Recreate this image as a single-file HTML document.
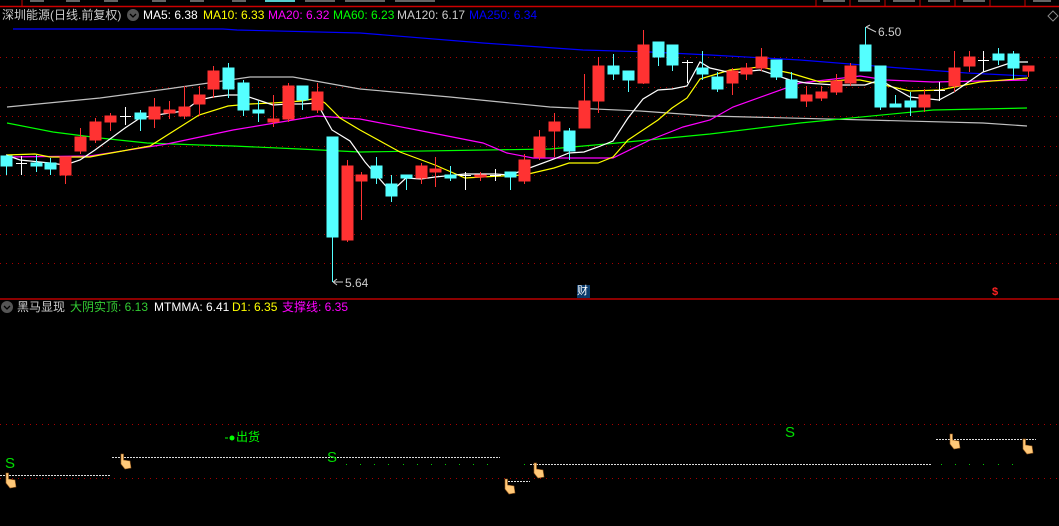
<!DOCTYPE html>
<html><head><meta charset="utf-8"><style>
html,body{margin:0;padding:0;background:#000;width:1059px;height:526px;overflow:hidden}
body{position:relative;font-family:"Liberation Sans","Noto Sans CJK SC",sans-serif;font-size:12px}
.t{position:absolute;white-space:nowrap;line-height:14px}
</style></head><body>
<svg width="1059" height="526" style="position:absolute;left:0;top:0" xmlns="http://www.w3.org/2000/svg">
<line x1="0" y1="6.5" x2="1059" y2="6.5" stroke="#c00" stroke-width="1.5"/>
<line x1="22" y1="0" x2="22" y2="6" stroke="#c00"/>
<g stroke="#c00"><line x1="816" y1="0" x2="816" y2="6"/><line x1="850" y1="0" x2="850" y2="6"/><line x1="885" y1="0" x2="885" y2="6"/><line x1="920" y1="0" x2="920" y2="6"/><line x1="955" y1="0" x2="955" y2="6"/><line x1="990" y1="0" x2="990" y2="6"/><line x1="1025" y1="0" x2="1025" y2="6"/></g>
<g fill="#666"><rect x="30" y="0" width="14" height="2"/><rect x="66" y="0" width="14" height="2"/><rect x="104" y="0" width="14" height="2"/><rect x="152" y="0" width="14" height="2"/><rect x="190" y="0" width="14" height="2"/><rect x="232" y="0" width="14" height="2"/><rect x="305" y="0" width="30" height="2"/><rect x="345" y="0" width="40" height="2"/><rect x="395" y="0" width="40" height="2"/><rect x="823" y="0" width="22" height="2"/><rect x="858" y="0" width="22" height="2"/><rect x="893" y="0" width="22" height="2"/><rect x="928" y="0" width="22" height="2"/><rect x="963" y="0" width="22" height="2"/><rect x="1033" y="0" width="18" height="2"/></g>
<rect x="265" y="0" width="30" height="2" fill="#5cc"/>
<path d="M1053 11 L1058 16 L1053 21 L1048 16 Z" fill="none" stroke="#888"/>
<g stroke="#a00" stroke-dasharray="1 5" stroke-width="1">
<line x1="0" y1="57.5" x2="1059" y2="57.5"/><line x1="0" y1="87.5" x2="1059" y2="87.5"/><line x1="0" y1="116.5" x2="1059" y2="116.5"/><line x1="0" y1="146.5" x2="1059" y2="146.5"/><line x1="0" y1="175.5" x2="1059" y2="175.5"/><line x1="0" y1="205.5" x2="1059" y2="205.5"/><line x1="0" y1="234.5" x2="1059" y2="234.5"/><line x1="0" y1="263.5" x2="1059" y2="263.5"/>
<line x1="0" y1="424.5" x2="1059" y2="424.5"/><line x1="0" y1="478.5" x2="1059" y2="478.5"/>
</g>
<line x1="0" y1="299" x2="1059" y2="299" stroke="#b00" stroke-width="1.5"/>
<g fill="none" stroke-width="1.2">
<polyline stroke="#0000ff" points="13,29 223,29 237,30 360,33 483,43 583,50 650,52 710,55 800,60 900,68 967,73 1027,76"/>
<polyline stroke="#c0c0c0" points="7,107 100,98 167,89 250,77 293,77 360,89 450,97 550,107 640,111 710,116 867,120 983,123 1027,126"/>
<polyline stroke="#00ff00" points="7,123 53,132 100,138 147,143 200,145 233,146 300,149 360,152 550,149 617,143 710,134 800,123 933,110 1027,108"/>
<polyline stroke="#ff00ff" points="7,157 90,156 167,144 233,130 317,116 360,119 417,130 483,143 507,153 533,158 613,158 650,140 683,127 710,120 733,107 800,83 860,76 887,80 933,82 1027,80"/>
<polyline stroke="#ffff00" points="6,155 35,154 50,157 90,157 100,155 150,146 199,115 228,106 250,104 273,103 302,101 317,98 325,103 340,118 360,130 400,152 435,165 465,178 500,176 524,175 554,168 569,163 598,163 613,157 628,140 643,130 658,120 672,108 687,98 700,79 730,70 760,67 790,73 820,82 845,80 860,80 880,84 910,91 940,90 980,82 1028,78"/>
<polyline stroke="#ffffff" points="6,155 20,160 50,163 65,165 80,160 95,150 125,128 140,118 169,113 184,111 199,100 213,97 228,95 243,95 258,100 273,105 288,104 302,104 317,103 332,130 350,141 365,162 391,192 406,178 421,179 435,177 465,174 495,174 510,175 524,170 554,159 569,153 584,152 598,147 613,141 628,118 643,99 658,90 672,89 687,86 700,62 710,68 732,73 760,70 790,80 806,83 835,85 865,85 880,80 910,97 939,100 954,92 983,72 1013,62 1028,62"/>
</g>
<g stroke-width="1">
<g stroke="#54ffff" fill="#54ffff">
<line x1="6.5" y1="155" x2="6.5" y2="175"/><rect x="1" y="156" width="11" height="10"/>
<line x1="36.5" y1="155" x2="36.5" y2="172"/><rect x="31" y="163" width="11" height="3"/>
<line x1="50.5" y1="158" x2="50.5" y2="175"/><rect x="45" y="163" width="11" height="6"/>
<line x1="140.5" y1="110" x2="140.5" y2="131"/><rect x="135" y="113" width="11" height="6"/>
<line x1="228.5" y1="63" x2="228.5" y2="98"/><rect x="223" y="68" width="11" height="21"/>
<line x1="243.5" y1="80" x2="243.5" y2="116"/><rect x="238" y="83" width="11" height="27"/>
<line x1="258.5" y1="101" x2="258.5" y2="122"/><rect x="253" y="110" width="11" height="3"/>
<line x1="302.5" y1="86" x2="302.5" y2="110"/><rect x="297" y="86" width="11" height="14"/>
<line x1="332.5" y1="137" x2="332.5" y2="282"/><rect x="327" y="137" width="11" height="100"/>
<line x1="376.5" y1="157" x2="376.5" y2="184"/><rect x="371" y="166" width="11" height="12"/>
<line x1="391.5" y1="175" x2="391.5" y2="202"/><rect x="386" y="184" width="11" height="12"/>
<line x1="406.5" y1="175" x2="406.5" y2="190"/><rect x="401" y="175" width="11" height="3"/>
<line x1="450.5" y1="166" x2="450.5" y2="181"/><rect x="445" y="175" width="11" height="3"/>
<line x1="510.5" y1="172" x2="510.5" y2="190"/><rect x="505" y="172" width="11" height="5"/>
<line x1="569.5" y1="128" x2="569.5" y2="160"/><rect x="564" y="131" width="11" height="20"/>
<line x1="613.5" y1="54" x2="613.5" y2="80"/><rect x="608" y="66" width="11" height="8"/>
<line x1="628.5" y1="71" x2="628.5" y2="92"/><rect x="623" y="71" width="11" height="9"/>
<line x1="658.5" y1="42" x2="658.5" y2="66"/><rect x="653" y="42" width="11" height="15"/>
<line x1="672.5" y1="45" x2="672.5" y2="71"/><rect x="667" y="45" width="11" height="20"/>
<line x1="702.5" y1="51" x2="702.5" y2="80"/><rect x="697" y="68" width="11" height="6"/>
<line x1="717.5" y1="72" x2="717.5" y2="92"/><rect x="712" y="77" width="11" height="12"/>
<line x1="776.5" y1="60" x2="776.5" y2="80"/><rect x="771" y="60" width="11" height="17"/>
<line x1="791.5" y1="72" x2="791.5" y2="98"/><rect x="786" y="80" width="11" height="18"/>
<line x1="865.5" y1="27" x2="865.5" y2="71"/><rect x="860" y="45" width="11" height="26"/>
<line x1="880.5" y1="66" x2="880.5" y2="110"/><rect x="875" y="66" width="11" height="41"/>
<line x1="895.5" y1="95" x2="895.5" y2="107"/><rect x="890" y="104" width="11" height="3"/>
<line x1="910.5" y1="92" x2="910.5" y2="116"/><rect x="905" y="101" width="11" height="6"/>
<line x1="998.5" y1="48" x2="998.5" y2="65"/><rect x="993" y="54" width="11" height="6"/>
<line x1="1013.5" y1="51" x2="1013.5" y2="80"/><rect x="1008" y="54" width="11" height="14"/>
</g>
<g stroke="#ff3232" fill="#ff3232">
<line x1="65.5" y1="157" x2="65.5" y2="184"/><rect x="60" y="157" width="11" height="18"/>
<line x1="80.5" y1="128" x2="80.5" y2="154"/><rect x="75" y="137" width="11" height="14"/>
<line x1="95.5" y1="118" x2="95.5" y2="143"/><rect x="90" y="122" width="11" height="18"/>
<line x1="110.5" y1="113" x2="110.5" y2="131"/><rect x="105" y="116" width="11" height="6"/>
<line x1="154.5" y1="98" x2="154.5" y2="128"/><rect x="149" y="107" width="11" height="12"/>
<line x1="169.5" y1="101" x2="169.5" y2="119"/><rect x="164" y="110" width="11" height="3"/>
<line x1="184.5" y1="86" x2="184.5" y2="119"/><rect x="179" y="107" width="11" height="9"/>
<line x1="199.5" y1="86" x2="199.5" y2="116"/><rect x="194" y="95" width="11" height="9"/>
<line x1="213.5" y1="66" x2="213.5" y2="98"/><rect x="208" y="71" width="11" height="18"/>
<line x1="273.5" y1="95" x2="273.5" y2="127"/><rect x="268" y="119" width="11" height="3"/>
<line x1="288.5" y1="83" x2="288.5" y2="122"/><rect x="283" y="86" width="11" height="33"/>
<line x1="317.5" y1="83" x2="317.5" y2="113"/><rect x="312" y="92" width="11" height="18"/>
<line x1="347.5" y1="160" x2="347.5" y2="242"/><rect x="342" y="166" width="11" height="74"/>
<line x1="361.5" y1="172" x2="361.5" y2="220"/><rect x="356" y="175" width="11" height="6"/>
<line x1="421.5" y1="163" x2="421.5" y2="184"/><rect x="416" y="166" width="11" height="12"/>
<line x1="435.5" y1="157" x2="435.5" y2="187"/><rect x="430" y="169" width="11" height="3"/>
<line x1="480.5" y1="172" x2="480.5" y2="181"/><rect x="475" y="175" width="11" height="2"/>
<line x1="524.5" y1="154" x2="524.5" y2="184"/><rect x="519" y="160" width="11" height="21"/>
<line x1="539.5" y1="130" x2="539.5" y2="160"/><rect x="534" y="137" width="11" height="20"/>
<line x1="554.5" y1="113" x2="554.5" y2="157"/><rect x="549" y="122" width="11" height="9"/>
<line x1="584.5" y1="74" x2="584.5" y2="128"/><rect x="579" y="101" width="11" height="27"/>
<line x1="598.5" y1="57" x2="598.5" y2="113"/><rect x="593" y="66" width="11" height="35"/>
<line x1="643.5" y1="30" x2="643.5" y2="84"/><rect x="638" y="45" width="11" height="38"/>
<line x1="732.5" y1="68" x2="732.5" y2="95"/><rect x="727" y="71" width="11" height="12"/>
<line x1="746.5" y1="63" x2="746.5" y2="80"/><rect x="741" y="68" width="11" height="6"/>
<line x1="761.5" y1="48" x2="761.5" y2="71"/><rect x="756" y="57" width="11" height="11"/>
<line x1="806.5" y1="86" x2="806.5" y2="107"/><rect x="801" y="95" width="11" height="6"/>
<line x1="821.5" y1="86" x2="821.5" y2="101"/><rect x="816" y="92" width="11" height="6"/>
<line x1="836.5" y1="74" x2="836.5" y2="95"/><rect x="831" y="81" width="11" height="11"/>
<line x1="850.5" y1="63" x2="850.5" y2="86"/><rect x="845" y="66" width="11" height="17"/>
<line x1="924.5" y1="89" x2="924.5" y2="112"/><rect x="919" y="95" width="11" height="12"/>
<line x1="954.5" y1="51" x2="954.5" y2="92"/><rect x="949" y="68" width="11" height="18"/>
<line x1="969.5" y1="51" x2="969.5" y2="72"/><rect x="964" y="57" width="11" height="9"/>
<line x1="1028.5" y1="66" x2="1028.5" y2="77"/><rect x="1023" y="66" width="11" height="5"/>
</g>
<g stroke="#fff">
<line x1="21.5" y1="156" x2="21.5" y2="175"/><line x1="16" y1="163.5" x2="27" y2="163.5"/>
<line x1="125.5" y1="107" x2="125.5" y2="125"/><line x1="120" y1="116.5" x2="131" y2="116.5"/>
<line x1="465.5" y1="172" x2="465.5" y2="190"/><line x1="460" y1="175.5" x2="471" y2="175.5"/>
<line x1="495.5" y1="169" x2="495.5" y2="181"/><line x1="490" y1="175.5" x2="501" y2="175.5"/>
<line x1="687.5" y1="60" x2="687.5" y2="83"/><line x1="682" y1="62.5" x2="693" y2="62.5"/>
<line x1="939.5" y1="82" x2="939.5" y2="101"/><line x1="934" y1="90.5" x2="945" y2="90.5"/>
<line x1="983.5" y1="51" x2="983.5" y2="72"/><line x1="978" y1="60.5" x2="989" y2="60.5"/>
</g>
</g>
<g stroke="#ccc" fill="none"><path d="M333 282 L343 282 M333 282 L337 279 M333 282 L337 285"/><path d="M866 27 L876 32 M866 27 L870 25"/></g>
<rect x="577" y="285" width="13" height="13" fill="#0a3a6a"/>
<g stroke="#ddd" stroke-dasharray="2 1" stroke-width="1">
<line x1="0" y1="475.5" x2="110" y2="475.5"/>
<line x1="112" y1="457.5" x2="500" y2="457.5"/>
<line x1="530" y1="464.5" x2="932" y2="464.5"/>
<line x1="505" y1="481.5" x2="530" y2="481.5"/>
<line x1="936" y1="439.5" x2="1036" y2="439.5"/>
</g>
<g fill="#0c0"><rect x="346" y="464" width="1" height="1"/><rect x="360" y="464" width="1" height="1"/><rect x="374" y="464" width="1" height="1"/><rect x="388" y="464" width="1" height="1"/><rect x="403" y="464" width="1" height="1"/><rect x="417" y="464" width="1" height="1"/><rect x="431" y="464" width="1" height="1"/><rect x="445" y="464" width="1" height="1"/><rect x="459" y="464" width="1" height="1"/><rect x="473" y="464" width="1" height="1"/><rect x="487" y="464" width="1" height="1"/><rect x="524" y="464" width="1" height="1"/><rect x="941" y="464" width="1" height="1"/><rect x="955" y="464" width="1" height="1"/><rect x="969" y="464" width="1" height="1"/><rect x="983" y="464" width="1" height="1"/><rect x="998" y="464" width="1" height="1"/><rect x="1012" y="464" width="1" height="1"/></g>
<g fill="#ffc878" stroke="#a06020" stroke-width="0.6">
<path d="M6 473 L8.5 473 L8.5 479 L15 480 L16 487 L10 488 L6 483 Z"/>
<path d="M121 454 L123.5 454 L123.5 460 L130 461 L131 468 L125 469 L121 464 Z"/>
<path d="M534 463 L536.5 463 L536.5 469 L543 470 L544 477 L538 478 L534 473 Z"/>
<path d="M505 479 L507.5 479 L507.5 485 L514 486 L515 493 L509 494 L505 489 Z"/>
<path d="M950 434 L952.5 434 L952.5 440 L959 441 L960 448 L954 449 L950 444 Z"/>
<path d="M1023 439 L1025.5 439 L1025.5 445 L1032 446 L1033 453 L1027 454 L1023 449 Z"/>
</g>
<circle cx="232" cy="438" r="2.5" fill="#0f0"/>
<line x1="225" y1="438" x2="228" y2="438" stroke="#0f0"/>
<circle cx="133" cy="15" r="6" fill="#555"/><path d="M130 14 L133 17 L136 14" stroke="#000" fill="none" stroke-width="1.3"/>
<circle cx="7" cy="307" r="6" fill="#555"/><path d="M4 306 L7 309 L10 306" stroke="#000" fill="none" stroke-width="1.3"/>
</svg>
<div class="t" style="left:2px;top:8px;color:#ccc">深圳能源(日线.前复权)</div>
<div class="t" style="left:143px;top:8px;color:#fff">MA5: 6.38</div>
<div class="t" style="left:203px;top:8px;color:#ff0">MA10: 6.33</div>
<div class="t" style="left:268px;top:8px;color:#f0f">MA20: 6.32</div>
<div class="t" style="left:333px;top:8px;color:#0f0">MA60: 6.23</div>
<div class="t" style="left:397px;top:8px;color:#ccc">MA120: 6.17</div>
<div class="t" style="left:469px;top:8px;color:#00f">MA250: 6.34</div>
<div class="t" style="left:878px;top:25px;color:#ccc">6.50</div>
<div class="t" style="left:345px;top:276px;color:#ccc">5.64</div>
<div class="t" style="left:577px;top:284px;color:#fff;font-size:11px">财</div>
<div class="t" style="left:992px;top:285px;color:#f22;font-size:11px;font-weight:bold">$</div>
<div class="t" style="left:17px;top:300px;color:#ccc">黑马显现</div>
<div class="t" style="left:70px;top:300px;color:#3c3">大阴实顶: 6.13</div>
<div class="t" style="left:154px;top:300px;color:#fff">MTMMA: 6.41</div>
<div class="t" style="left:232px;top:300px;color:#ff0">D1: 6.35</div>
<div class="t" style="left:282px;top:300px;color:#f0f">支撑线: 6.35</div>
<div class="t" style="left:236px;top:430px;color:#0f0">出货</div>
<div class="t" style="left:5px;top:457px;color:#0d0;font-size:15px">S</div>
<div class="t" style="left:327px;top:451px;color:#0d0;font-size:15px">S</div>
<div class="t" style="left:785px;top:426px;color:#0d0;font-size:15px">S</div>
</body></html>
